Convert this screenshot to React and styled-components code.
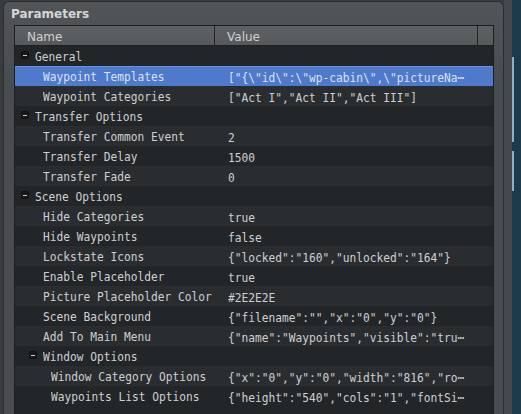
import React from "react";
import styled, { createGlobalStyle } from "styled-components";

const Global = createGlobalStyle`
  html, body { margin: 0; padding: 0; background: #3a3d40; overflow: hidden; }
  #root { width: 521px; height: 414px; }
`;

const Page = styled.div`
  display: flex;
  width: 521px;
  height: 414px;
  overflow: hidden;
  background: #3a3d40;
`;

const LeftStrip = styled.div`
  width: 3px;
  flex: none;
  background: #393c3f;
`;

const Panel = styled.div`
  width: 501px;
  flex: none;
  box-sizing: border-box;
  margin-top: 1px;
  border: 1px solid #2a2c2e;
  border-bottom: none;
  border-radius: 6px 6px 0 0;
  background: linear-gradient(#525558, #4a4d50 80px);
  display: flex;
  flex-direction: column;
`;

const Title = styled.div`
  padding: 3.5px 0 3.5px 7px;
  font: bold 12px/16px "DejaVu Sans", sans-serif;
  color: #d3d6d9;
`;

const Table = styled.div`
  margin-left: 10px;
  width: 480px;
  box-sizing: border-box;
  border: 1px solid #1c1e20;
  border-bottom: none;
  flex: 1;
  background: #232629;
  display: flex;
  flex-direction: column;
`;

const Header = styled.div`
  display: grid;
  grid-template-columns: 199px 262px 15px;
  column-gap: 1px;
  background: #222426;
  border-bottom: 1px solid #1c1e20;
`;

const HeaderCell = styled.div`
  height: 19px;
  box-sizing: border-box;
  padding: 3px 0 0 12px;
  font: 12px/16px "DejaVu Sans", sans-serif;
  color: #cdd1d4;
  background: linear-gradient(#5f6265, #56595c);
`;

const Row = styled.div`
  display: grid;
  grid-template-columns: 200px 1fr;
  height: 20px;
  box-sizing: border-box;
  padding-top: 2px;
  background: ${(p) => (p.$selected ? "#4f79cb" : p.$alt ? "#2a2d30" : "#232629")};
  box-shadow: ${(p) => (p.$selected ? "inset 0 1px 0 #6b92da" : "none")};
  color: ${(p) => (p.$selected ? "#d9e3f7" : "#cdd0d2")};
`;

const NameCell = styled.div`
  display: flex;
  align-items: center;
  height: 18px;
  padding-left: ${(p) => 20 + p.$depth * 8}px;
  position: relative;
  overflow: hidden;
`;

const ValueCell = styled.div`
  height: 18px;
  padding-left: 13px;
  overflow: hidden;
`;

const Label = styled.span`
  display: inline-block;
  font: 13px/18px "DejaVu Sans Mono", monospace;
  white-space: pre;
  transform: scaleX(0.862);
  transform-origin: 0 50%;
`;

const Toggle = styled.span`
  position: absolute;
  left: ${(p) => 6 + p.$depth * 8}px;
  top: 3px;
  width: 8px;
  height: 8px;
  box-sizing: border-box;
  border: 1px solid #0e0f10;
  border-radius: 2px;
  background: #18191b;
  &::after {
    content: "";
    position: absolute;
    left: 1px;
    right: 1px;
    top: 2.5px;
    height: 1px;
    background: #c9cbcd;
  }
`;

const Gutter = styled.div`
  width: 8px;
  flex: none;
  background: #46494c;
`;

const Desktop = styled.div`
  flex: 1;
  background: #1c3a4a;
  position: relative;
`;

const Edge = styled.div`
  position: absolute;
  left: 0;
  width: 2px;
  background: #8db0c6;
`;

const E = "\u22EF";

const rows = [
  { g: true, d: 0, n: "General" },
  { d: 1, n: "Waypoint Templates", v: '["{\\"id\\":\\"wp-cabin\\",\\"pictureNa' + E, sel: true },
  { d: 1, n: "Waypoint Categories", v: '["Act I","Act II","Act III"]' },
  { g: true, d: 0, n: "Transfer Options" },
  { d: 1, n: "Transfer Common Event", v: "2" },
  { d: 1, n: "Transfer Delay", v: "1500" },
  { d: 1, n: "Transfer Fade", v: "0" },
  { g: true, d: 0, n: "Scene Options" },
  { d: 1, n: "Hide Categories", v: "true" },
  { d: 1, n: "Hide Waypoints", v: "false" },
  { d: 1, n: "Lockstate Icons", v: '{"locked":"160","unlocked":"164"}' },
  { d: 1, n: "Enable Placeholder", v: "true" },
  { d: 1, n: "Picture Placeholder Color", v: "#2E2E2E" },
  { d: 1, n: "Scene Background", v: '{"filename":"","x":"0","y":"0"}' },
  { d: 1, n: "Add To Main Menu", v: '{"name":"Waypoints","visible":"tru' + E },
  { g: true, d: 1, n: "Window Options" },
  { d: 2, n: "Window Category Options", v: '{"x":"0","y":"0","width":"816","ro' + E },
  { d: 2, n: "Waypoints List Options", v: '{"height":"540","cols":"1","fontSi' + E },
];

export default function App() {
  return (
    <Page>
      <Global />
      <LeftStrip />
      <Panel>
        <Title>Parameters</Title>
        <Table>
          <Header>
            <HeaderCell>Name</HeaderCell>
            <HeaderCell>Value</HeaderCell>
            <HeaderCell />
          </Header>
          {rows.map((r, i) => (
            <Row key={i} $alt={i % 2 === 0 && !r.g} $selected={r.sel}>
              <NameCell $depth={r.d}>
                {r.g && <Toggle $depth={r.d} />}
                <Label>{r.n}</Label>
              </NameCell>
              <ValueCell>{r.v && <Label>{r.v}</Label>}</ValueCell>
            </Row>
          ))}
        </Table>
      </Panel>
      <Gutter />
      <Desktop>
        <Edge style={{ top: 57, height: 85 }} />
        <Edge style={{ top: 151, height: 40 }} />
      </Desktop>
    </Page>
  );
}
